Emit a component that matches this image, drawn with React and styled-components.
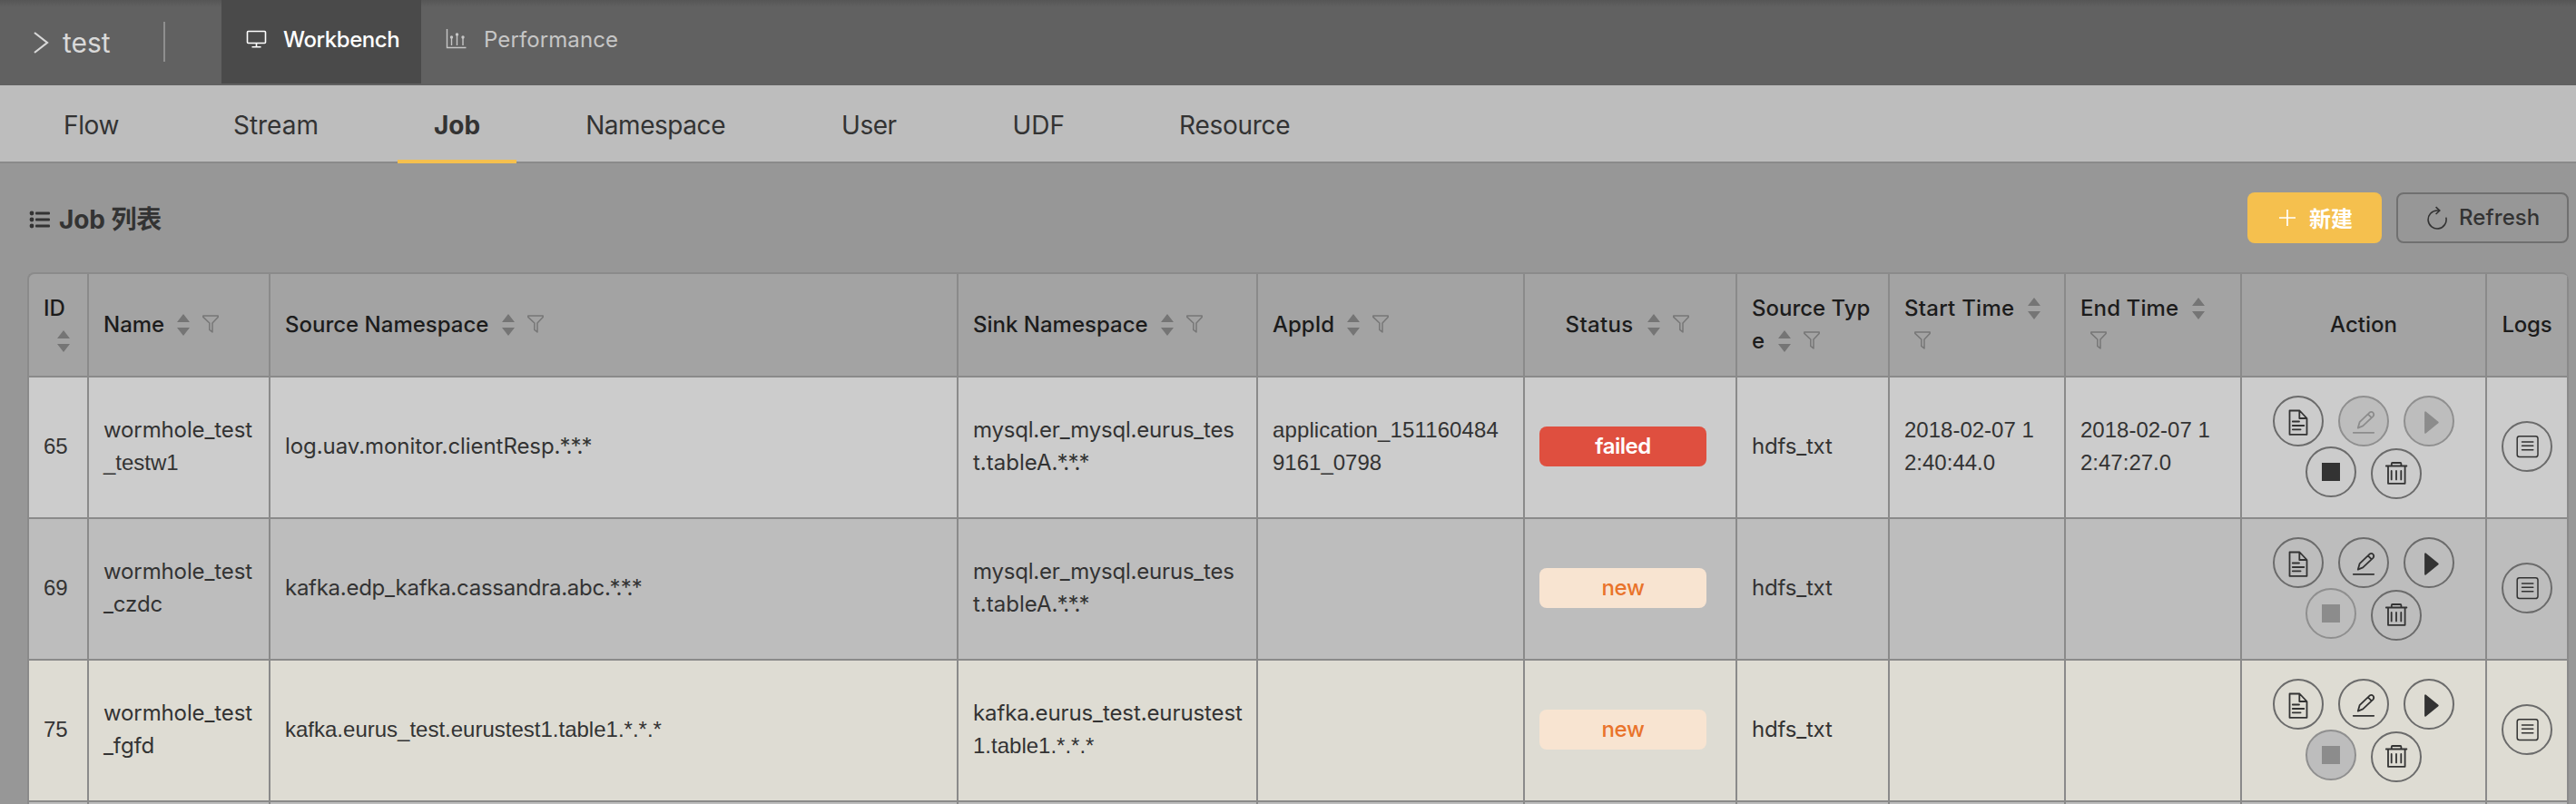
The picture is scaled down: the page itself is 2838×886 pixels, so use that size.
import React from "react";
import styled, { createGlobalStyle, css } from "styled-components";

const GlobalStyle = createGlobalStyle`
  * { box-sizing: border-box; }
  body {
    margin: 0;
    background: #979797;
    font-family: Inter, "Noto Sans CJK SC", sans-serif;
    font-size: 24px;
    color: #333;
  }
`;

const line = "#8a8a8a";

const Page = styled.div`
  height: 886px;
  overflow: hidden;
`;

/* Top bar */

const TopBar = styled.header`
  display: flex;
  height: 94px;
  background: linear-gradient(#565656, #616161 8px);
`;

const Project = styled.div`
  display: flex;
  align-items: center;
  gap: 15px;
  width: 180px;
  height: 94px;
  padding: 0 0 0 36px;
  font-size: 30px;
  color: #d9d9d9;
`;

const TopDivider = styled.span`
  width: 2px;
  height: 44px;
  margin: 24px 62px 0 0;
  background: #8f8f8f;
`;

const TopTab = styled.a`
  display: flex;
  align-items: center;
  width: ${(p) => (p.$active ? 220 : 240)}px;
  height: 92px;
  padding: 0 0 6px 27px;
  gap: ${(p) => (p.$active ? 18 : 19)}px;
  background: ${(p) => (p.$active ? "#4a4a4a" : "transparent")};
  color: ${(p) => (p.$active ? "#fff" : "#c6c6c6")};
  font-weight: ${(p) => (p.$active ? 500 : 400)};
  letter-spacing: ${(p) => (p.$active ? -0.42 : 0.1)}px;
`;

/* Section navigation */

const Nav = styled.nav`
  display: flex;
  height: 86px;
  padding-left: 33px;
  background: #bdbdbd;
  border-bottom: 2px solid ${line};
`;

const NavItem = styled.a`
  display: flex;
  align-items: center;
  height: 86px;
  padding: 2px 37px 0 37px;
  margin-right: ${(p) => p.$gap ?? 54}px;
  font-size: 28px;
  letter-spacing: ${(p) => p.$ls || 0}px;
  ${(p) =>
    p.$active &&
    css`
      padding: 6px 40px 0 40px;
      font-weight: 700;
      border-bottom: 4px solid #f5c04e;
    `}
`;

/* Title and buttons */

const Toolbar = styled.div`
  display: flex;
  align-items: center;
  height: 120px;
  padding: 0 8px 0 32px;
`;

const Title = styled.h1`
  display: flex;
  align-items: center;
  gap: 9px;
  margin: 4px auto 0 0;
  font-size: 28px;
  font-weight: 700;
  letter-spacing: -0.1px;
  line-height: 36px;
`;

const Button = styled.button`
  display: flex;
  align-items: center;
  height: 56px;
  padding: 0 0 1px;
  border-radius: 8px;
  font: inherit;
  font-weight: 500;
`;

const CreateButton = styled(Button)`
  width: 148px;
  margin-right: 16px;
  padding-left: 34px;
  gap: 14px;
  border: 0;
  background: #f5c04e;
  color: #fff;
  font-weight: 700;
`;

const RefreshButton = styled(Button)`
  width: 190px;
  padding-left: 31px;
  gap: 12px;
  border: 2px solid #707070;
  background: transparent;
  color: #333;
  letter-spacing: 0.1px;
`;

/* Table */

const Table = styled.div`
  width: 2800px;
  margin-left: 30px;
  border: 2px solid ${line};
  border-right: 0;
  border-radius: 8px 8px 0 0;
  overflow: hidden;
`;

const rowTone = { plain: "#cccccc", stripe: "#bdbdbd", hover: "#dedcd3" };

const Row = styled.div`
  display: grid;
  grid-template-columns: 66px 200px 758px 330px 294px 234px 168px 194px 194px 270px 90px;
  height: 156px;
  background: ${(p) => rowTone[p.$tone]};
`;

const HeadRow = styled(Row)`
  height: 114px;
  background: #a3a3a3;
`;

const Cell = styled.div`
  display: flex;
  flex-direction: column;
  justify-content: center;
  padding: 0 0 2px 16px;
  border-right: 2px solid ${line};
  border-bottom: 2px solid ${line};
  line-height: 36px;
  white-space: pre;
`;

const HeadCell = styled(Cell)`
  padding: 0 0 0 16px;
  font-weight: 500;
  color: #1c1c1c;
  letter-spacing: ${(p) => p.$ls || 0}px;
  ${(p) =>
    p.$center &&
    css`
      padding: 0;
      align-items: center;
    `}
`;

const CenterCell = styled(Cell)`
  padding-left: 0;
  align-items: center;
`;

const ActionCell = styled(Cell)`
  justify-content: flex-start;
  align-items: center;
  padding: 20px 0 0;
`;

const Line = styled.div`
  height: 36px;
`;

const Text = styled.span`
  letter-spacing: ${(p) => p.$ls || 0}px;
  ${(p) =>
    p.$num &&
    css`
      font-family: "Liberation Sans", sans-serif;
    `}
`;

const Stars = styled.span`
  margin-left: -1px;
  letter-spacing: -1.8px;
`;

const badgeTone = {
  failed: css`
    background: #df4f3f;
    color: #fff;
    font-weight: 600;
    letter-spacing: -0.5px;
  `,
  new: css`
    background: #f8e4d1;
    color: #e9732b;
    font-weight: 500;
    letter-spacing: -0.3px;
  `,
};

const Badge = styled.span`
  width: 184px;
  height: 44px;
  border-radius: 8px;
  line-height: 43px;
  text-align: center;
  ${(p) => badgeTone[p.$status]}
`;

const ActionLine = styled.div`
  display: flex;
  gap: 16px;
  height: 56px;
`;

const RoundButton = styled.button`
  width: 56px;
  height: 56px;
  flex: none;
  margin: ${(p) => p.$drop || 0}px 0 0;
  padding: 0;
  border: 2px solid ${(p) => (p.$disabled ? "#8f8f8f" : "#6b6b6b")};
  border-radius: 50%;
  background: ${(p) => (p.$disabled ? "#bdbdbd" : "transparent")};
  color: ${(p) => (p.$disabled ? "#8c8c8c" : "#333")};
  svg { display: block; }
`;

const SorterIcon = styled.svg`
  margin-left: ${(p) => p.$ml ?? 15}px;
  vertical-align: -4px;
  fill: #757575;
`;

const FilterIcon = styled.svg`
  margin-left: ${(p) => p.$ml ?? 14}px;
  vertical-align: -1px;
  fill: none;
  stroke: #777;
  stroke-width: 1.5;
  stroke-linejoin: round;
`;

const Sorter = ({ ml }) => (
  <SorterIcon $ml={ml} width="14" height="24" viewBox="0 0 14 24">
    <path d="M7 0l7 9H0zM7 24l7-9H0z" />
  </SorterIcon>
);

const Filter = ({ ml }) => (
  <FilterIcon $ml={ml} width="18" height="20" viewBox="0 0 18 20">
    <path d="M.8 1h16.4v1.4L11 9v10l-3.2-2.6V9L.8 2.4z" />
  </FilterIcon>
);

const Glyph = ({ children, w = 1.8 }) => (
  <svg width="52" height="52" viewBox="0 0 52 52" fill="none" stroke="currentColor" strokeWidth={w} strokeLinecap="round" strokeLinejoin="round">
    {children}
  </svg>
);

const FileGlyph = () => (
  <Glyph>
    <path d="M16.5 14.5H27.5L35.5 23V40.8H16.5ZM27.3 14.8V23H35.3M19.8 26.5H27M19.8 31H32.3M19.8 35.3H28.6" />
  </Glyph>
);
const EditGlyph = () => (
  <Glyph>
    <path d="M14.8 38.8H37.2M19.8 33.6L21.6 27.2L32.6 16.6Q34.8 15 36.6 17Q38 19 36.4 20.8L25.2 31.4ZM30.8 18.4L34.8 22.3" />
  </Glyph>
);
const PlayGlyph = () => (
  <Glyph>
    <path d="M22 16.2V38.8L35.8 27.5Z" fill="currentColor" />
  </Glyph>
);
const StopGlyph = () => (
  <Glyph w={0}>
    <path d="M16 16H36V36H16Z" fill="currentColor" />
  </Glyph>
);
const TrashGlyph = () => (
  <Glyph>
    <path d="M14.8 17.5H37.4M20.8 17.2V14.9Q20.8 14 21.8 14H30.4Q31.4 14 31.4 14.9V17.2M17 17.5V36.8H35.6V17.5M20.7 23V32.4M26 23V32.4M31.3 23V32.4" />
  </Glyph>
);
const LogGlyph = () => (
  <Glyph w={1.5}>
    <rect x="15.2" y="14.8" width="22.8" height="22.8" rx="2.5" />
    <path d="M20.5 21H32.8M20.5 25.3H32.8M20.5 29.7H32.8" />
  </Glyph>
);

const stars = <Stars>*.*.*</Stars>;

const jobs = [
  {
    id: "65",
    tone: "plain",
    name: [<Text $ls={-0.12}>wormhole_test</Text>, <Text $num>_testw1</Text>],
    source: <><Text $ls={-0.06}>log.uav.monitor.clientResp.</Text>{stars}</>,
    sink: [<Text $ls={-0.2}>mysql.er_mysql.eurus_tes</Text>, <>t.tableA.{stars}</>],
    app: [<Text $num $ls={0.12}>application_151160484</Text>, <Text $num>9161_0798</Text>],
    status: "failed",
    start: ["2018-02-07 1", "2:40:44.0"],
    end: ["2018-02-07 1", "2:47:27.0"],
    disabled: ["edit", "play"],
  },
  {
    id: "69",
    tone: "stripe",
    name: [<Text $ls={-0.12}>wormhole_test</Text>, <Text $ls={-0.1}>_czdc</Text>],
    source: <><Text $ls={-0.27}>kafka.edp_kafka.cassandra.abc.</Text>{stars}</>,
    sink: [<Text $ls={-0.2}>mysql.er_mysql.eurus_tes</Text>, <>t.tableA.{stars}</>],
    app: [],
    status: "new",
    start: [],
    end: [],
    disabled: ["stop"],
  },
  {
    id: "75",
    tone: "hover",
    name: [<Text $ls={-0.12}>wormhole_test</Text>, <Text $ls={-0.1}>_fgfd</Text>],
    source: <Text $num>kafka.eurus_test.eurustest1.table1.*.*.*</Text>,
    sink: [<Text $ls={-0.1}>kafka.eurus_test.eurustest</Text>, <Text $num>1.table1.*.*.*</Text>],
    app: [],
    status: "new",
    start: [],
    end: [],
    disabled: ["stop"],
  },
];

const Lines = ({ items, num }) =>
  items.map((item, i) => <Line key={i}>{num ? <Text $num>{item}</Text> : item}</Line>);

function JobRow({ job }) {
  const off = (name) => job.disabled.includes(name);
  return (
    <Row $tone={job.tone}>
      <Cell><Line><Text $num>{job.id}</Text></Line></Cell>
      <Cell><Lines items={job.name} /></Cell>
      <Cell><Line>{job.source}</Line></Cell>
      <Cell><Lines items={job.sink} /></Cell>
      <Cell><Lines items={job.app} /></Cell>
      <Cell><Badge $status={job.status}>{job.status}</Badge></Cell>
      <Cell><Line><Text $ls={-0.18}>hdfs_txt</Text></Line></Cell>
      <Cell><Lines items={job.start} num /></Cell>
      <Cell><Lines items={job.end} num /></Cell>
      <ActionCell>
        <ActionLine>
          <RoundButton><FileGlyph /></RoundButton>
          <RoundButton $disabled={off("edit")}><EditGlyph /></RoundButton>
          <RoundButton $disabled={off("play")}><PlayGlyph /></RoundButton>
        </ActionLine>
        <ActionLine>
          <RoundButton $disabled={off("stop")}><StopGlyph /></RoundButton>
          <RoundButton $drop={2}><TrashGlyph /></RoundButton>
        </ActionLine>
      </ActionCell>
      <CenterCell><RoundButton><LogGlyph /></RoundButton></CenterCell>
    </Row>
  );
}

export default function App() {
  return (
    <Page>
      <GlobalStyle />
      <TopBar>
        <Project>
          <svg width="18" height="24" viewBox="0 0 18 24" fill="none" stroke="currentColor" strokeWidth="2.2">
            <path d="M2 1L16 12L2 23" />
          </svg>
          test
        </Project>
        <TopDivider />
        <TopTab $active>
          <svg width="23" height="20" viewBox="0 0 23 20" fill="none" stroke="currentColor" strokeWidth="1.6">
            <rect x="1.5" y="1.5" width="20" height="13" rx="1" />
            <path d="M11.5 14.5V18.5M6.5 18.7H16.5" />
          </svg>
          Workbench
        </TopTab>
        <TopTab>
          <svg width="23" height="22" viewBox="0 0 23 22" fill="none" stroke="currentColor" strokeWidth="1.4">
            <path d="M1.5 0V20.5H22.5M6.5 18V9M12.5 18V6M19 18V9" />
            <g fill="currentColor" stroke="none">
              <circle cx="6.5" cy="9" r="1.7" /><circle cx="12.5" cy="6" r="1.7" /><circle cx="19" cy="9" r="1.7" />
            </g>
          </svg>
          Performance
        </TopTab>
      </TopBar>
      <Nav>
        <NavItem $ls={-0.4} $gap={52}>Flow</NavItem>
        <NavItem $gap={50}>Stream</NavItem>
        <NavItem $active $gap={39}>Job</NavItem>
        <NavItem $ls={-0.45}>Namespace</NavItem>
        <NavItem $ls={-0.5}>User</NavItem>
        <NavItem $gap={52}>UDF</NavItem>
        <NavItem $ls={-0.3}>Resource</NavItem>
      </Nav>
      <Toolbar>
        <Title>
          <svg width="24" height="20" viewBox="0 0 24 20" fill="currentColor">
            <circle cx="3" cy="3" r="2.4" /><circle cx="3" cy="10" r="2.4" /><circle cx="3" cy="17" r="2.4" />
            <rect x="7" y="1.6" width="16" height="3" rx="1" /><rect x="7" y="8.6" width="16" height="3" rx="1" /><rect x="7" y="15.6" width="16" height="3" rx="1" />
          </svg>
          Job 列表
        </Title>
        <CreateButton>
          <svg width="20" height="20" viewBox="0 0 20 20" fill="none" stroke="currentColor" strokeWidth="1.7">
            <path d="M10 1V19M1 10H19" />
          </svg>
          新建
        </CreateButton>
        <RefreshButton>
          <svg width="24" height="26" viewBox="0 0 24 26" fill="none" stroke="currentColor" strokeWidth="1.6">
            <path d="M21.8 12.6A10 10 0 1 1 12 5L14.5 5M10.6 1.2L14.8 5L10.6 9" />
          </svg>
          Refresh
        </RefreshButton>
      </Toolbar>
      <Table>
        <HeadRow>
          <HeadCell><Line>ID</Line><Line><Sorter /></Line></HeadCell>
          <HeadCell><Line>Name<Sorter ml={14} /><Filter /></Line></HeadCell>
          <HeadCell><Line>Source Namespace<Sorter /><Filter /></Line></HeadCell>
          <HeadCell><Line>Sink Namespace<Sorter ml={14} /><Filter /></Line></HeadCell>
          <HeadCell><Line>AppId<Sorter ml={14} /><Filter /></Line></HeadCell>
          <HeadCell $ls={0.35} $center><Line>Status<Sorter /><Filter /> </Line></HeadCell>
          <HeadCell><Line>Source Typ</Line><Line>e<Sorter /><Filter /></Line></HeadCell>
          <HeadCell $ls={0.25}><Line>Start Time<Sorter /></Line><Line><Filter ml={11} /></Line></HeadCell>
          <HeadCell $ls={0.12}><Line>End Time<Sorter /></Line><Line><Filter ml={11} /></Line></HeadCell>
          <HeadCell $center><Line>Action</Line></HeadCell>
          <HeadCell $center $ls={-0.2}><Line>Logs</Line></HeadCell>
        </HeadRow>
        {jobs.map((job) => <JobRow key={job.id} job={job} />)}
        <Row $tone="stripe">
          {Array.from({ length: 11 }, (_, i) => <Cell key={i} />)}
        </Row>
      </Table>
    </Page>
  );
}
